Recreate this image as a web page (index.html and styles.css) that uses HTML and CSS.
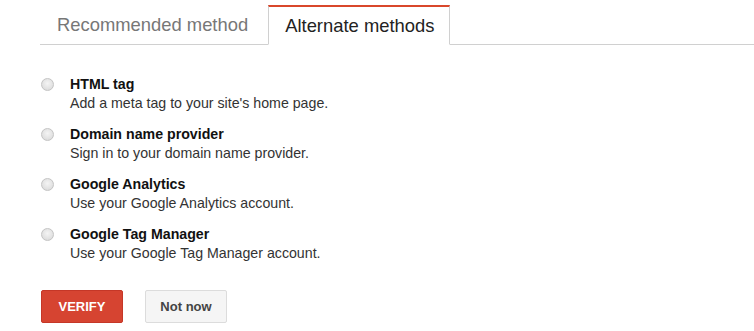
FILE: index.html
```html
<!DOCTYPE html>
<html lang="en">
<head>
    <meta charset="UTF-8">
    <title>Verify ownership</title>
    <link rel="stylesheet" href="styles.css">
</head>
<body>
    <div class="tabs">
        <div class="tab">Recommended method</div>
        <div class="tab active">Alternate methods</div>
        <div class="tab-fill"></div>
    </div>

    <ul class="methods">
        <li class="method">
            <span class="radio"></span>
            <div class="method-text">
                <div class="method-title">HTML tag</div>
                <div class="method-desc">Add a meta tag to your site's home page.</div>
            </div>
        </li>
        <li class="method">
            <span class="radio"></span>
            <div class="method-text">
                <div class="method-title">Domain name provider</div>
                <div class="method-desc">Sign in to your domain name provider.</div>
            </div>
        </li>
        <li class="method">
            <span class="radio"></span>
            <div class="method-text">
                <div class="method-title">Google Analytics</div>
                <div class="method-desc">Use your Google Analytics account.</div>
            </div>
        </li>
        <li class="method">
            <span class="radio"></span>
            <div class="method-text">
                <div class="method-title">Google Tag Manager</div>
                <div class="method-desc">Use your Google Tag Manager account.</div>
            </div>
        </li>
    </ul>

    <div class="actions">
        <button class="btn btn-primary">VERIFY</button>
        <button class="btn btn-plain">Not now</button>
    </div>
</body>
</html>
```

FILE: styles.css
```css
body {
    font-family: "Liberation Sans", Arial, sans-serif;
    background-color: #fff;
    color: #222;
    margin: 0;
    padding: 0;
}

.tabs {
    display: flex;
    align-items: flex-end;
    padding: 5px 0 0 40px;
}

.tab {
    height: 38px;
    line-height: 38px;
    padding: 0 20px 0 17px;
    font-size: 18.4px;
    color: #777;
    border-bottom: 1px solid #d0d0d0;
}

.tab.active {
    color: #222;
    height: 37px;
    padding: 0 15px 0 16px;
    border: 1px solid #d0d0d0;
    border-top: 2px solid #d9472b;
    border-bottom: 1px solid #fff;
}

.tab-fill {
    flex: 1;
    border-bottom: 1px solid #d0d0d0;
}

.methods {
    list-style: none;
    margin: 0;
    padding: 30px 0 0 40px;
}

.method {
    display: flex;
    align-items: flex-start;
    margin-bottom: 12px;
}

.radio {
    width: 11px;
    height: 11px;
    margin: 3px 16px 0 1px;
    border: 1px solid #c4c4c4;
    border-radius: 50%;
    background: radial-gradient(circle at 50% 40%, #f4f4f4 0, #e2e2e2 60%, #d4d4d4 100%);
    flex-shrink: 0;
}

.method-title {
    font-size: 14.2px;
    font-weight: bold;
    line-height: 19px;
    color: #111;
}

.method-desc {
    font-size: 14.2px;
    line-height: 19px;
    color: #333;
}

.actions {
    display: flex;
    gap: 22px;
    padding: 15px 0 0 41px;
}

.btn {
    height: 33px;
    width: 82px;
    border-radius: 2px;
    font-family: "Liberation Sans", Arial, sans-serif;
    font-size: 13px;
    font-weight: bold;
    cursor: pointer;
}

.btn-primary {
    background-color: #d64431;
    border: 1px solid #c53727;
    color: #fff;
}

.btn-plain {
    background-color: #f5f5f5;
    border: 1px solid #dcdcdc;
    color: #444;
}
```
